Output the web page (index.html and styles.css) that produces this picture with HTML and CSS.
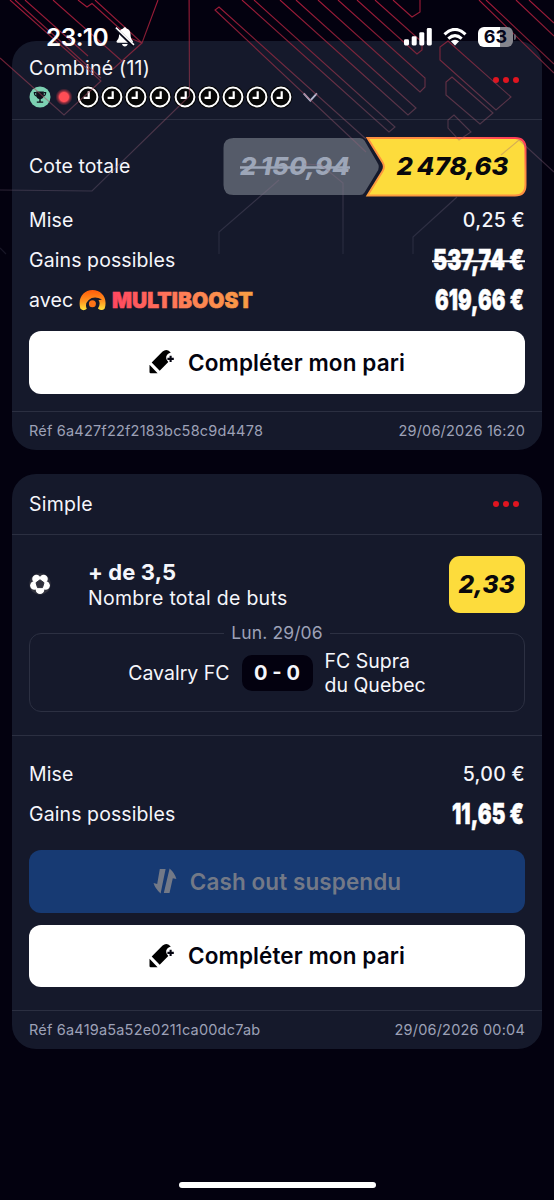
FILE: index.html
```
<!DOCTYPE html>
<html lang="fr">
<head>
<meta charset="utf-8">
<title>Mes paris</title>
<link rel="stylesheet" href="styles.css">
</head>
<body>
<svg class="defs" width="0" height="0">
  <defs>
    <symbol id="clock" viewBox="0 0 24 24"><circle cx="12" cy="12" r="11.3" fill="#050505"/><circle cx="12" cy="12" r="9.400" fill="#080808" stroke="#fff" stroke-width="2"/><path d="M12.700 6.200V12.800H7.600" fill="none" stroke="#fff" stroke-width="2.200"/></symbol>
    <symbol id="crayon" viewBox="0 0 26 26"><path d="M0.500 15.800L8.600 24.300H1.700a1.200 1.200 0 0 1-1.200-1.200Z"/><path d="M2.700 13.400L13.600 2.600Q16.300.2 19.300 1.500L21.800 3.500Q16.800 4.900 17.200 9.300Q17.600 11.600 19.300 13L10.700 21.700Z"/><path d="M21.600 6.700v6.400M18.400 9.900H24.800" fill="none" stroke="currentColor" stroke-width="2.100"/></symbol>
  </defs>
</svg>
<div class="screen">
  <header class="status">
    <div class="status-left">
      <span class="time">23:10</span>
      <svg class="bell" width="20" height="22" viewBox="0 0 20 22"><path d="M9.800 1.200c.9 0 1.500.6 1.600 1.400 2.700.8 4.100 2.900 4.100 5.700 0 3.600.9 5 2.200 6.400.6.700.3 2.100-.9 2.100H2.700c-1.200 0-1.500-1.400-.9-2.100C3.200 13.300 4.100 11.900 4.100 8.300c0-2.800 1.400-4.900 4.100-5.700.1-.8.700-1.400 1.600-1.400ZM7 18h5.700c-.3 1.600-1.400 2.500-2.800 2.500S7.300 19.600 7 18Z" fill="#fff"/><path d="M.2 2.200L18.600 20" stroke="#090a1a" stroke-width="3.200"/><path d="M.9 1.600L19 18.900" stroke="#fff" stroke-width="1.500"/></svg>
    </div>
    <div class="status-right">
      <svg width="28" height="18" viewBox="0 0 28 18" fill="#fff"><rect x="0" y="11.300" width="5" height="6.200" rx="1.400"/><rect x="7.700" y="8.300" width="5" height="9.200" rx="1.400"/><rect x="15.300" y="4.200" width="5" height="13.300" rx="1.400"/><rect x="22.800" y="0" width="5" height="17.500" rx="1.400"/></svg>
      <svg width="24" height="18" viewBox="0 0 24 18" fill="none" stroke="#fff"><path d="M1.500 6.400Q12-3.600 22.500 6.400" stroke-width="3.100"/><path d="M5.300 10.600Q12 4.600 18.700 10.600" stroke-width="3"/><path d="M7.900 13.300Q12 10.200 16.100 13.300L12 17.500Z" fill="#fff" stroke="none"/></svg>
      <div class="battery"><span>63</span></div>
    </div>
  </header>

  <article class="card card-combo">
    <div class="card-head">
      <div class="head-main">
        <h2>Combiné (11)</h2>
        <div class="legs">
          <svg viewBox="0 0 24 24"><circle cx="12" cy="12" r="10.500" fill="#7cd0b2"/><path d="M8.200 6.400h7.600v3.800q-.4 3.500-3.100 3.800v2.400h2.500v1.300H8.800v-1.300h2.500V14q-2.700-.3-3.100-3.800Z" fill="#10111c"/><path d="M8.400 7.600H6.300q0 3.400 2.800 3.500M15.600 7.600h2.100q0 3.400-2.800 3.500" fill="none" stroke="#10111c" stroke-width="1.100"/></svg>
          <i class="live"></i>
          <svg><use href="#clock"/></svg><svg><use href="#clock"/></svg><svg><use href="#clock"/></svg><svg><use href="#clock"/></svg><svg><use href="#clock"/></svg><svg><use href="#clock"/></svg><svg><use href="#clock"/></svg><svg><use href="#clock"/></svg><svg><use href="#clock"/></svg>
          <svg class="chevron" viewBox="0 0 24 24"><path d="M4.700 8.300L11.300 15.600 17.900 8.300" fill="none" stroke="#b4b7cf" stroke-width="2"/></svg>
        </div>
      </div>
      <div class="more"><i></i><i></i><i></i></div>
    </div>
    <div class="row odds-row">
      <span>Cote totale</span>
      <svg class="odds" width="304" height="62" viewBox="0 0 304 62">
        <defs><linearGradient id="edge" x1="0" y1="1" x2="1" y2="0"><stop offset="0" stop-color="#fb9e3d"/><stop offset=".7" stop-color="#ff8a42"/><stop offset=".95" stop-color="#ff3f55"/><stop offset="1" stop-color="#ff3f55"/></linearGradient></defs>
        <path d="M10.500 3H137q3 0 4.500 2.500L154 27q3.500 5 0 10L141.500 57.500Q140 60 137 60H10.500Q.5 60 .5 50V13Q.5 3 10.500 3Z" fill="#555b69"/>
        <path d="M144.500 3H292q10.500 0 10.500 10.500v36.500Q302.500 60.500 292 60.500H144.500L159.500 36.300q2.800-4.500 0-9Z" fill="#fddc3c" stroke="url(#edge)" stroke-width="2"/>
        <text class="odds-old" x="17" y="40" textLength="110" lengthAdjust="spacingAndGlyphs">2&#8201;150,94</text>
        <path d="M17 32.500H127" stroke="#9da6b8" stroke-width="2.400"/>
        <text class="odds-new" x="173.500" y="40" textLength="112" lengthAdjust="spacingAndGlyphs">2&#8201;478,63</text>
      </svg>
    </div>
    <div class="row"><span>Mise</span><span class="stake">0,25 €</span></div>
    <div class="row"><span>Gains possibles</span>
      <svg class="win" width="94" height="40" viewBox="0 0 94 40"><text x="1" y="29.500" textLength="91" lengthAdjust="spacingAndGlyphs">537,74 €</text><path d="M0 21.200H93" stroke="#fff" stroke-width="2"/></svg>
    </div>
    <div class="row"><span class="boost">avec
      <svg width="27" height="23" viewBox="0 0 27 23"><defs><linearGradient id="fire" x1="0" y1="1" x2="0" y2="0"><stop offset="0" stop-color="#ffe23b"/><stop offset=".45" stop-color="#ff9420"/><stop offset="1" stop-color="#ff5a0a"/></linearGradient></defs><path d="M1.300 19.500C-1.500 9 4.500 1 13.500 1S29 9 25.700 19.500Q22.800 22.500 18.900 19.500Q22 14.500 19.500 11.300L23 10.500Q15 6.500 9.700 11Q5.500 14.800 7.800 19.800Q4.500 22.800 1.300 19.500Z" fill="url(#fire)"/><circle cx="13.400" cy="14.700" r="3.500" fill="#ff7417"/></svg>
      <svg width="144" height="28" viewBox="0 0 144 28"><defs><linearGradient id="brand" x1="0" x2="1"><stop offset="0" stop-color="#ff4760"/><stop offset=".45" stop-color="#ff7a58"/><stop offset="1" stop-color="#f79f43"/></linearGradient></defs><text class="brand" x="0" y="22.300" textLength="141" lengthAdjust="spacingAndGlyphs">MULTIBOOST</text></svg></span>
      <svg class="win" width="94" height="40" viewBox="0 0 94 40"><text x="3" y="29.500" textLength="89" lengthAdjust="spacingAndGlyphs">619,66 €</text></svg>
    </div>
    <div class="actions">
      <button class="btn btn-light"><svg width="26" height="26"><use href="#crayon"/></svg>Compléter mon pari</button>
    </div>
    <footer class="card-foot"><span>Réf 6a427f22f2183bc58c9d4478</span><span>29/06/2026 16:20</span></footer>
  </article>

  <article class="card card-single">
    <div class="card-head">
      <h2>Simple</h2>
      <div class="more"><i></i><i></i><i></i></div>
    </div>
    <div class="pick">
      <svg class="ball" width="22" height="22" viewBox="0 0 22 22"><circle cx="11" cy="11" r="10.700" fill="#30313d"/><g fill="#fff"><circle cx="11" cy="16.800" r="4.300"/><circle cx="5.400" cy="12.500" r="4.300"/><circle cx="16.600" cy="12.500" r="4.300"/><circle cx="7.400" cy="5.900" r="4.200"/><circle cx="14.600" cy="5.900" r="4.200"/><circle cx="11" cy="11" r="6"/></g><path d="M11 6.800L15 9.700 13.500 14.600H8.500L7 9.700Z" fill="#30313d" stroke="#30313d" stroke-linejoin="round"/></svg>
      <div class="pick-text"><strong>+ de 3,5</strong><span>Nombre total de buts</span></div>
      <div class="pick-odds">2,33</div>
    </div>
    <fieldset class="match">
      <legend>Lun. 29/06</legend>
      <div class="teams">
        <span class="home">Cavalry FC</span>
        <b class="score">0 - 0</b>
        <span class="away">FC Supra<br>du Quebec</span>
      </div>
    </fieldset>
    <div class="totals">
      <div class="row"><span>Mise</span><span class="stake">5,00 €</span></div>
      <div class="row"><span>Gains possibles</span>
        <svg class="win" width="94" height="40" viewBox="0 0 94 40"><text x="20" y="29.500" textLength="72" lengthAdjust="spacingAndGlyphs">11,65 €</text></svg>
      </div>
    </div>
    <div class="actions">
      <button class="btn btn-blue" disabled><svg width="24" height="26" viewBox="0 0 24 26" fill="currentColor"><path d="M6.800 1H12.600L7.600 25.400Q2.200 20.800.500 15L4.200 15.900Z"/><path d="M16.600.5Q21.800 5 23.400 11L19.800 10.200 16.500 25H10.800Z"/></svg>Cash out suspendu</button>
      <button class="btn btn-light"><svg width="26" height="26"><use href="#crayon"/></svg>Compléter mon pari</button>
    </div>
    <footer class="card-foot"><span>Réf 6a419a5a52e0211ca00dc7ab</span><span>29/06/2026 00:04</span></footer>
  </article>

  <svg class="circuit" width="554" height="260" viewBox="0 0 554 260" fill="none">
    <defs><linearGradient id="fade" gradientUnits="userSpaceOnUse" x1="0" y1="0" x2="0" y2="260"><stop offset="0" stop-color="#b51c3c" stop-opacity=".9"/><stop offset=".2" stop-color="#a82840" stop-opacity=".7"/><stop offset=".45" stop-color="#a05a70" stop-opacity=".42"/><stop offset=".75" stop-color="#85718b" stop-opacity=".3"/><stop offset="1" stop-color="#777b96" stop-opacity=".16"/></linearGradient></defs>
    <g stroke="url(#fade)" stroke-width="1.100">
      <path d="M10 0L101 81 64 115 0 58M15 0L101 78M25 0L88 56M53 0L123 62M78 0L87 7 92 3.500 130 38 142 43 158 0M142 43L113 69M95 0L142 43"/>
      <path d="M189.100 0L189.500 96 92 191 0 190M0 248L6 254"/>
      <path d="M366 152L215 10 219 7 366 139"/>
      <path d="M242 0L389 132 395 127 254 0M280 0L408 115 416 108 296 0M318 0L420 92 425 87V78L338 0M357 0L417 54 422 50V42L375 0M393 0L412 17 420 12V0"/>
      <path d="M440 60V47L448 41 511 97 496 110ZM446 95V82L452 77 493 113 480 124ZM448 128V120L454 115 471 132 459 140Z"/>
      <path d="M479 0L554 73M486 0L554 64M516 0L554 36M529 0L554 23"/>
      <path d="M554 172L519 140 501 155M457 197L413 237V254M279 180L219 232V254M304 164L321 165 343 183V254"/>
    </g>
  </svg>
  <div class="home-bar"></div>
</div>
</body>
</html>
```
FILE: styles.css
```
* { box-sizing: border-box; }
body {
  margin: 0;
  background: #03010f;
  color: #f5f6fb;
  font-family: Inter, "Liberation Sans", sans-serif;
  font-size: 19.5px;
  letter-spacing: .1px;
}
svg { display: block; flex: none; }
.defs { position: absolute; }
.screen { position: relative; width: 554px; height: 1200px; padding: 41px 12px 0; overflow: hidden; }

.status {
  position: absolute; z-index: 3; left: 46px; top: 22px; width: 471px; height: 30px;
  display: flex; align-items: center; justify-content: space-between;
}
.status-left, .status-right { display: flex; align-items: center; }
.status-left { gap: 7px; }
.status-right { gap: 11px; }
.time { font-size: 24.5px; font-weight: 600; letter-spacing: -.6px; color: #fff; }
.battery {
  position: relative; width: 35px; height: 20px; border-radius: 6px;
  background: linear-gradient(90deg, #fff 63%, #85858d 63%);
  color: #05061a; font-size: 18px; font-weight: 700; line-height: 20px; text-align: center;
  margin-right: 4px;
}
.battery::after { content: ""; position: absolute; right: -3px; top: 7px; width: 2px; height: 6px; border-radius: 0 2px 2px 0; background: #62636f; }

.card { background: #15192b; border-radius: 24px; overflow: hidden; }
.card-combo { height: 409px; }
.card-single { height: 575px; margin-top: 23.5px; }
.card-head {
  display: flex; align-items: center; justify-content: space-between;
  padding: 0 23px 0 17px; border-bottom: 1px solid #2b2f41;
}
.card-combo .card-head { height: 79px; }
.card-single .card-head { height: 61.5px; }
h2 { margin: 0; font-size: 19.5px; font-weight: 400; line-height: 24px; letter-spacing: .25px; }
.head-main { padding-top: 5px; }
.legs { display: flex; align-items: center; gap: .1px; height: 24px; margin: 5px 0 0 -1px; }
.legs svg { width: 24px; height: 24px; }
.live { width: 24px; height: 24px; background: radial-gradient(circle, #ff4d55 0 4.5px, rgba(255, 65, 80, .5) 6px, transparent 8.5px); }
.legs .chevron { margin-left: 6px; }
.more { display: flex; gap: 3.5px; }
.more i { width: 6.4px; height: 6.4px; border-radius: 50%; background: #df1520; }

.row { display: flex; align-items: center; justify-content: space-between; height: 40px; padding: 0 17px; }
.odds-row { height: 80px; padding: 11px 15px 0 17px; }
.odds text { font-weight: 800; font-style: italic; font-size: 24.5px; }
.odds .odds-old { fill: #9da6b8; }
.odds .odds-new { fill: #08080c; }
.row > .stake { font-weight: 500; letter-spacing: .3px; }
.win { margin-right: -1px; }
.win text { font-weight: 900; font-size: 29px; fill: #fff; stroke: #fff; stroke-width: .5px; }
.boost { display: flex; align-items: center; gap: 6px; }
.brand { font-weight: 900; font-size: 21.5px; fill: url(#brand); stroke: url(#brand); stroke-width: .6px; }

.actions { display: flex; flex-direction: column; gap: 12px; padding: 11px 17px 17px; }
.btn {
  display: flex; align-items: center; justify-content: center; gap: 13px;
  height: 62.5px; border: 0; border-radius: 12px; padding: 0;
  font: 600 22.5px Inter, "Liberation Sans", sans-serif;
  letter-spacing: .1px;
}
.btn-light { background: #fff; color: #03030f; }
.btn-blue { background: #173a73; color: #737987; }
.card-foot {
  display: flex; align-items: center; justify-content: space-between;
  height: 38px; padding: 0 17px; border-top: 1px solid #2b2f41;
  color: #9da1b7; font-size: 14.5px; letter-spacing: .2px;
}

.pick { display: flex; align-items: center; height: 98px; padding: 0 17px; }
.pick-text { display: flex; flex-direction: column; margin-left: 37px; flex: 1; }
.pick-text strong { font-size: 22px; font-weight: 700; line-height: 27px; }
.pick-text span { line-height: 24px; letter-spacing: .3px; }
.pick-odds {
  width: 76.5px; height: 57px; border-radius: 11px; background: #fddc3c; color: #08080c;
  font-size: 24.5px; font-weight: 800; font-style: italic; line-height: 57px; text-align: center;
}
.match {
  height: 89px; margin: -10px 17px 0; padding: 0; min-width: 0;
  border: 1.5px solid #2c3042; border-radius: 12px;
}
.match legend { margin: 0 auto; padding: 0 7px; color: #9da1b7; font-size: 17.5px; line-height: 20px; }
.teams { display: grid; grid-template-columns: 1fr 71px 1fr; column-gap: 12px; align-items: center; height: 60px; letter-spacing: 0; }
.home { text-align: right; }
.away { line-height: 24px; }
.score { height: 36px; line-height: 36px; border-radius: 10px; background: #03010f; text-align: center; font-size: 20px; }
.totals { margin-top: 23px; padding-top: 18px; border-top: 1px solid #2b2f41; }
.card-single .actions { padding: 16px 17px 23px; }

.circuit { position: absolute; left: 0; top: 0; z-index: 2; pointer-events: none; }
.home-bar { position: absolute; left: 179px; top: 1182px; width: 197px; height: 6px; border-radius: 3px; background: #fff; }
```
